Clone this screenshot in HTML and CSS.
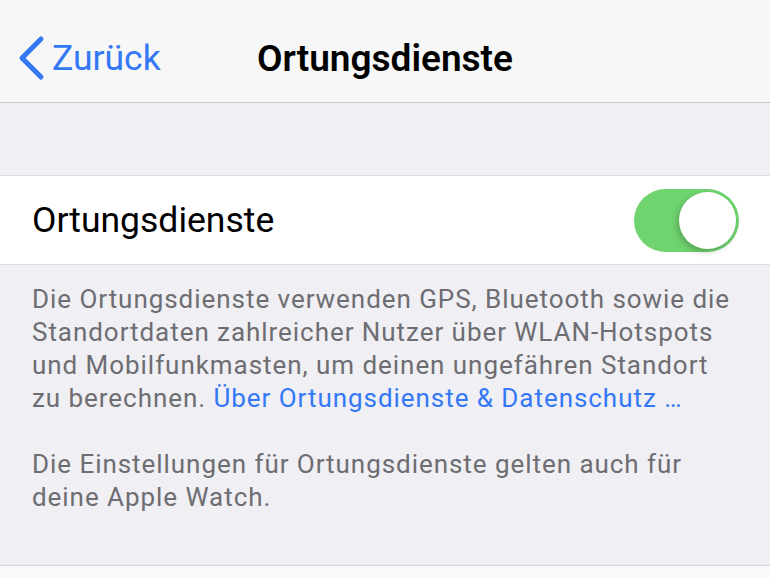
FILE: index.html
```html
<!DOCTYPE html>
<html lang="de">
<head>
  <meta charset="UTF-8">
  <meta name="viewport" content="width=device-width, initial-scale=1.0">
  <link rel="stylesheet" href="styles.css">
</head>
<body>

<header class="navbar">
  <a class="back" href="#">
    <svg class="chevron" width="30" height="46" viewBox="0 0 30 46">
      <path d="M25 4 L6 23 L25 42" fill="none" stroke="currentColor" stroke-width="5" stroke-linecap="round" stroke-linejoin="round"/>
    </svg>
    <span>Zurück</span>
  </a>
  <h1 class="title">Ortungsdienste</h1>
  <div></div>
</header>

<div class="spacer"></div>

<section class="group">
  <div class="cell">
    <span class="cell-label">Ortungsdienste</span>
    <label class="switch">
      <input type="checkbox" checked>
      <span class="knob"></span>
    </label>
  </div>
</section>

<div class="footer">
  <p>Die Ortungsdienste verwenden GPS, Bluetooth sowie die Standortdaten zahlreicher Nutzer über WLAN-Hotspots und Mobilfunkmasten, um deinen ungefähren Standort zu berechnen. <a href="#">Über Ortungsdienste &amp; Datenschutz …</a></p>
  <p>Die Einstellungen für Ortungsdienste gelten auch für deine Apple Watch.</p>
</div>

<div class="bottom"></div>

</body>
</html>
```

FILE: styles.css
```css
body {
  margin: 0;
  background: #efeff4;
  font-family: Roboto, "Liberation Sans", sans-serif;
  color: #000;
}

/* Top navigation bar */
.navbar {
  box-sizing: border-box;
  height: 103px;
  padding-top: 14px;
  background: #f7f7f7;
  border-bottom: 1px solid #c6c6ca;
  display: grid;
  grid-template-columns: 1fr auto 1fr;
  align-items: center;
}

.back {
  display: flex;
  align-items: center;
  gap: 6px;
  padding-left: 16px;
  color: #3478f6;
  text-decoration: none;
  font-size: 35.5px;
}

.title {
  margin: 0;
  font-size: 37px;
  font-weight: 600;
}

.spacer {
  height: 72px;
}

/* Settings group */
.group {
  background: #fff;
  border-top: 1px solid #dcdce0;
  border-bottom: 1px solid #dcdce0;
}

.cell {
  height: 88px;
  padding: 0 31px 0 32px;
  display: flex;
  align-items: center;
  justify-content: space-between;
}

.cell-label {
  font-size: 35.5px;
}

/* Toggle switch */
.switch {
  position: relative;
  width: 105px;
  height: 63px;
}

.switch input {
  display: none;
}

.switch .knob {
  position: absolute;
  inset: 0;
  border-radius: 32px;
  background: #6fd46f;
}

.switch .knob::after {
  content: "";
  position: absolute;
  top: 3px;
  right: 3px;
  width: 57px;
  height: 57px;
  border-radius: 50%;
  background: #fff;
  box-shadow: -2px 3px 6px rgba(0, 0, 0, 0.22);
}

/* Explanation text */
.footer {
  padding: 18px 30px 51px 32px;
  color: #6d6d72;
  font-size: 26px;
  letter-spacing: 0.95px;
  line-height: 33px;
}

.footer p {
  margin: 0 0 33px;
}

.footer p:last-child {
  margin-bottom: 0;
}

.footer a {
  color: #3478f6;
  text-decoration: none;
}

.bottom {
  border-top: 1px solid #d4d4d8;
  background: #fafafa;
  height: 20px;
}
```
